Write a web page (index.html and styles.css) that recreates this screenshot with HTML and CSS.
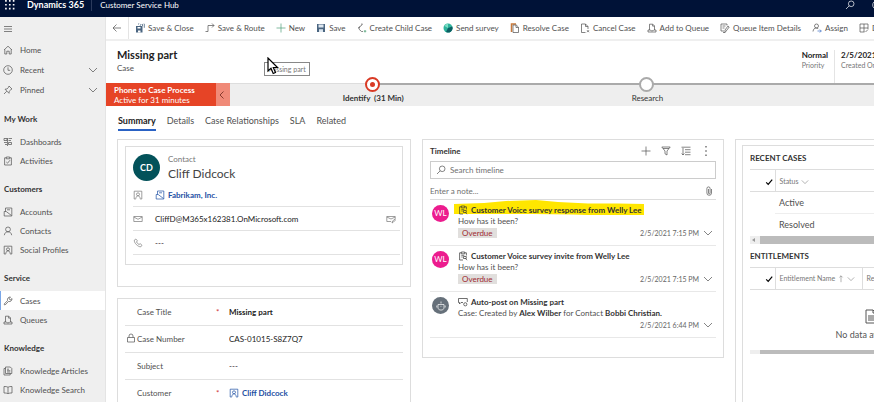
FILE: index.html
```html
<!DOCTYPE html>
<html lang="en">
<head>
<meta charset="utf-8">
<title>Case: Missing part - Dynamics 365</title>
<link rel="stylesheet" href="styles.css">
</head>
<body>
<svg class="sprite" aria-hidden="true">
  <symbol id="chev" viewBox="0 0 10 10"><path d="M1 3l4 4 4-4"/></symbol>
  <symbol id="home" viewBox="0 0 10 10"><path d="M1 5l4-3.800L9 5M1.800 4.500V9h2V6.200h2.400V9h2V4.500"/></symbol>
  <symbol id="clock" viewBox="0 0 10 10"><circle cx="5" cy="5" r="4.300"/><path d="M5 2.300V5.300h2.200"/></symbol>
  <symbol id="pin" viewBox="0 0 10 10"><path d="M6 1l3 3-1 .5-1.800 1.800-.2 2L2 4.200l2-.2L5.600 2.200zM3.800 6.200L1 9"/></symbol>
  <symbol id="dash" viewBox="0 0 10 10"><path d="M1 1.500h3v2H1zM5.500 1.500H9M5.500 3.500H8M1 5.500h3M2 7.500h2M5.500 5.500h3v2h-3zM4.500 1v8"/></symbol>
  <symbol id="activity" viewBox="0 0 10 10"><path d="M3.300 1.800H1.600V9h6.800V1.800H6.700M3.300 1h3.400v1.800H3.300zM3.300 6l1.200 1.200L7 4.200"/></symbol>
  <symbol id="account" viewBox="0 0 10 10"><path d="M2.500 4.500V1H8.800v8H1.200V4.500h2L8.500 8.500M4 2.800h3"/></symbol>
  <symbol id="person" viewBox="0 0 10 10"><circle cx="5" cy="3.400" r="2.400"/><path d="M1.300 9.200C1.700 6.900 3 5.800 5 5.800s3.300 1.100 3.700 3.400"/></symbol>
  <symbol id="profile" viewBox="0 0 10 10"><path d="M2.800 9H1.200V1.200h7.600V9H7.200"/><circle cx="5" cy="4.300" r="1.500"/><path d="M2.800 8.800c.2-2 1-2.900 2.200-2.900s2 .9 2.200 2.900"/></symbol>
  <symbol id="wrench" viewBox="0 0 10 10"><path d="M1 8.200l3.500-3.600C4 2.500 5.500.8 7.500 1L6.300 2.300l.3 1.200 1.200.2L9 2.500C9.200 4.500 7.500 6 5.500 5.500L2 9.100z"/></symbol>
  <symbol id="queue" viewBox="0 0 10 10"><path d="M2.500 7V1.200h3.300l1.700 1.700V7M5.600 1.400v1.700h1.700M1 7h2.200l.8.800h2l.8-.8H9v2H1z"/></symbol>
  <symbol id="article" viewBox="0 0 10 10"><path d="M2.500 7.500V1h4.800l1.500 1.500v5zM2.500 2.500H1V9h6.200V7.500M4 3.200h2M4 4.700h3.300M4 6h3.300"/></symbol>
  <symbol id="book" viewBox="0 0 10 10"><path d="M5 2.200C4 1.500 2.500 1.500 1 1.500V8c1.500 0 3 0 4 .8 1-.8 2.500-.8 4-.8V1.500c-1.500 0-3 0-4 .7zM5 2.200v6.600"/></symbol>
  <symbol id="search" viewBox="0 0 10 10"><circle cx="6.200" cy="3.800" r="2.800"/><path d="M4.200 5.800L1 9"/></symbol>
  <symbol id="plus" viewBox="0 0 10 10"><path d="M5 .5v9M.5 5h9"/></symbol>
  <symbol id="mail" viewBox="0 0 10 10"><path d="M.8 2.500h8.400v5H.8zM.8 3L5 5.300 9.200 3"/></symbol>
  <symbol id="clip" viewBox="0 0 10 10"><path d="M3.300 1.800H1.600V9H5M8.400 4.500V1.800H6.700M3.300 1h3.400v1.800H3.300zM3.300 4.300h3M3.300 6h1.500M5.500 5.500h2.800v2H5.500zM7.500 7.500L9 9.200"/></symbol>
  <symbol id="check" viewBox="0 0 10 10"><path d="M1.500 5.500L4 8l5-6"/></symbol>
</svg>

<div class="shell">
  <header class="topbar">
    <button class="plain waffle" aria-label="App launcher"><svg viewBox="0 0 10 10"><path d="M1 1h1.500v1.500H1zM4.500 1H6v1.500H4.500zM8 1h1.500v1.500H8zM1 4.500h1.500V6H1zM4.500 4.500H6V6H4.500zM8 4.500h1.500V6H8zM1 8h1.500v1.500H1zM4.500 8H6v1.500H4.500zM8 8h1.500v1.500H8z"/></svg></button>
    <a class="brand" href="#">Dynamics 365</a>
    <a class="app" href="#">Customer Service Hub</a>
    <div class="tools">
      <button class="plain" aria-label="Search"><svg class="icon"><use href="#search"/></svg></button>
      <button class="plain" aria-label="Assistant"><svg class="icon"><use href="#clock"/></svg></button>
    </div>
  </header>

  <div class="body">
    <nav class="sidebar">
      <button class="plain burger" aria-label="Site map"><svg class="icon" viewBox="0 0 10 10"><path d="M1 2.500h8M1 5h8M1 7.500h8"/></svg></button>
      <a class="nav tall" href="#"><svg class="icon"><use href="#home"/></svg>Home</a>
      <a class="nav tall" href="#"><svg class="icon"><use href="#clock"/></svg>Recent<svg class="icon more"><use href="#chev"/></svg></a>
      <a class="nav tall" href="#"><svg class="icon"><use href="#pin"/></svg>Pinned<svg class="icon more"><use href="#chev"/></svg></a>
      <h2>My Work</h2>
      <a class="nav" href="#"><svg class="icon"><use href="#dash"/></svg>Dashboards</a>
      <a class="nav" href="#"><svg class="icon"><use href="#activity"/></svg>Activities</a>
      <h2>Customers</h2>
      <a class="nav" href="#"><svg class="icon"><use href="#account"/></svg>Accounts</a>
      <a class="nav" href="#"><svg class="icon"><use href="#person"/></svg>Contacts</a>
      <a class="nav" href="#"><svg class="icon"><use href="#profile"/></svg>Social Profiles</a>
      <h2>Service</h2>
      <a class="nav current" href="#" aria-current="page"><svg class="icon"><use href="#wrench"/></svg>Cases</a>
      <a class="nav" href="#"><svg class="icon"><use href="#queue"/></svg>Queues</a>
      <h2>Knowledge</h2>
      <a class="nav" href="#"><svg class="icon"><use href="#article"/></svg>Knowledge Articles</a>
      <a class="nav" href="#"><svg class="icon"><use href="#book"/></svg>Knowledge Search</a>
    </nav>

    <main class="main">
      <div class="commands">
        <button class="plain back" aria-label="Back"><svg class="icon" viewBox="0 0 10 10"><path d="M9 5H1M4.500 1.500L1 5l3.500 3.500"/></svg></button>
        <button class="plain cmd"><svg class="icon" viewBox="0 0 10 10"><path fill="#4a6580" stroke="none" d="M1 3h6.500v6.500H1z"/><path fill="#fff" stroke="none" d="M2.500 4h3v1.500h-3zM3 7.500h2.500v2H3z"/><path stroke="#2f4f6e" d="M3 1h1M5 .8l1 1-1 1M8 .8L7 2l1 1M9.300.8v4"/></svg>Save &amp; Close</button>
        <button class="plain cmd"><svg class="icon" viewBox="0 0 10 10"><path d="M.5 8.500H3v-6h6M7 .5l2 2-2 2"/></svg>Save &amp; Route</button>
        <button class="plain cmd"><svg class="icon green"><use href="#plus"/></svg>New</button>
        <button class="plain cmd"><svg class="icon" viewBox="0 0 10 10"><path fill="#4a6580" stroke="none" d="M1 1h8v8H1z"/><path fill="#dce6ef" stroke="none" d="M2.500 1.500h5v3h-5zM3 6.200h4V9H3z"/></svg>Save</button>
        <button class="plain cmd"><svg class="icon" viewBox="0 0 10 10"><path d="M5.500 1.500L3 3.500 1.800 6 4.500 8.500H6M3 3.500L1 5M5.500 1l-1.500.2"/><path stroke="#3f9a6b" d="M8 7v2.500M6.800 8.200h2.500"/></svg>Create Child Case</button>
        <button class="plain cmd"><svg class="icon" viewBox="0 0 10 10"><circle cx="5" cy="5" r="4.500" fill="#2fb39c" stroke="none"/><path fill="#0b5f63" stroke="none" d="M5 5l4.300-1.500A4.500 4.500 0 0 1 3 9z"/><path fill="#7ddcc4" stroke="none" d="M1.500 3A4.500 4.500 0 0 1 5 .5L5 5z"/></svg>Send survey</button>
        <button class="plain cmd"><svg class="icon" viewBox="0 0 10 10"><path stroke="#c9793a" stroke-width="1.500" d="M1.500 9V1H6"/><path d="M3 2h3.300l2.200 2.200v5.300H3zM6 2v2.500h2.500"/></svg>Resolve Case</button>
        <button class="plain cmd"><svg class="icon" viewBox="0 0 10 10"><path d="M5.500 9.500H1.500V1h4L8 3.500V6M5.500 1v2.500H8M7 7.200l2 2M9 7.200l-2 2"/></svg>Cancel Case</button>
        <button class="plain cmd"><svg class="icon"><use href="#queue"/></svg>Add to Queue</button>
        <button class="plain cmd"><svg class="icon" viewBox="0 0 10 10"><path d="M1 1h6v1.500M1 1v7h3M2.500 3h3M2.500 5h2M5 9.500V7l3-4 1.200 1-3 4zM3 9.500h2"/></svg>Queue Item Details</button>
        <button class="plain cmd"><svg class="icon" viewBox="0 0 10 10"><circle cx="4.500" cy="3" r="2"/><path d="M1 8.500C1.300 6 2.500 5 4.500 5l1.700.6"/><path stroke="#3c6fc4" d="M5.500 8h3.800M7.800 6.500L9.300 8 7.800 9.500"/></svg>Assign</button>
        <button class="plain cmd"><svg class="icon" viewBox="0 0 10 10"><path d="M1 1h8v5M1 1v8h4.500M1 5h8M5 1v8M6.500 9L9 6.500"/></svg>D</button>
      </div>

      <div class="record">
        <div class="heading">
          <h1>Missing part</h1>
          <p>Case</p>
        </div>
        <dl class="stats">
          <div><dd>Normal</dd><dt>Priority</dt></div>
          <div><dd>2/5/2021</dd><dt>Created On</dt></div>
        </dl>
        <div class="tip" role="tooltip">Missing part</div>
        <svg class="cursor" viewBox="0 0 12 18"><path d="M1 1v13l3-2.700 2.200 5.200 2.300-1-2.200-5H10.500z"/></svg>
      </div>

      <div class="process">
        <button class="plain flow"><b>Phone to Case Process</b><span>Active for 31 minutes</span></button>
        <button class="plain fold" aria-label="Previous stage"><svg class="icon" viewBox="0 0 10 10"><path d="M6.500 1.500L3 5l3.500 3.500"/></svg></button>
        <ol class="stages">
          <li class="active"><i class="dot"></i>Identify &nbsp;(31 Min)</li>
          <li><i class="dot"></i>Research</li>
          <li class="rest"></li>
        </ol>
      </div>

      <div class="tabs" role="tablist">
        <button class="plain tab on" role="tab" aria-selected="true">Summary</button>
        <button class="plain tab" role="tab">Details</button>
        <button class="plain tab" role="tab">Case Relationships</button>
        <button class="plain tab" role="tab">SLA</button>
        <button class="plain tab" role="tab">Related</button>
      </div>

      <div class="columns">
        <div class="column">
          <section class="card contact">
            <div class="inner">
              <div class="who">
                <span class="initials">CD</span>
                <div><p>Contact</p><h3>Cliff Didcock</h3></div>
              </div>
              <div class="line"><svg class="icon"><use href="#profile"/></svg><a href="#"><svg class="icon"><use href="#account"/></svg>Fabrikam, Inc.</a></div>
              <div class="line"><svg class="icon"><use href="#mail"/></svg><span>CliffD@M365x162381.OnMicrosoft.com</span><button class="plain send" aria-label="Send email"><svg class="icon" viewBox="0 0 10 10"><path d="M5 7.500H.8v-5h8.400V5M.8 3L5 5l4.200-2M6 9l.5-2L9 5.200l.5.8L7.500 8z"/></svg></button></div>
              <div class="line"><svg class="icon" viewBox="0 0 10 10"><path d="M2.800 1L1.300 2.200C1 5 5 9 7.800 8.800L9 7.300 7.200 5.700l-1.200.8C5 6 4 5 3.500 4l.9-1.200z"/></svg><span>---</span></div>
            </div>
          </section>
          <section class="card form">
            <div class="field"><label for="title">Case Title</label><em>*</em><input id="title" class="strong" value="Missing part"></div>
            <div class="field"><svg class="icon lock" viewBox="0 0 10 10"><path d="M1.500 4.500h7V9h-7zM3 4.500V3a2 2 0 0 1 4 0v1.500"/></svg><label for="number">Case Number</label><em></em><input id="number" value="CAS-01015-S8Z7Q7" readonly></div>
            <div class="field"><label for="subject">Subject</label><em></em><input id="subject" value="---"></div>
            <div class="field"><span class="label">Customer</span><em>*</em><a href="#"><svg class="icon"><use href="#profile"/></svg>Cliff Didcock</a></div>
          </section>
        </div>

        <section class="card timeline">
          <div class="bar">
            <h3>Timeline</h3>
            <button class="plain" aria-label="Add"><svg class="icon"><use href="#plus"/></svg></button>
            <button class="plain" aria-label="Filter"><svg class="icon" viewBox="0 0 10 10"><path d="M.8 1h8.400L6 5v4L4 7.800V5zM2 2.500h6"/></svg></button>
            <button class="plain" aria-label="Sort"><svg class="icon" viewBox="0 0 10 10"><path d="M.5 1.200h9M4 3.700h5.500M4 6.200h5.500M4 8.700h5.500M2 2v7M.7 7.500L2 9l1.300-1.500"/></svg></button>
            <button class="plain" aria-label="More"><svg class="icon solid" viewBox="0 0 10 10"><path d="M4.400 0h1.200v1.500H4.400zM4.400 4.200h1.200v1.500H4.400zM4.400 8.400h1.200v1.500H4.400z"/></svg></button>
          </div>
          <label class="find"><svg class="icon"><use href="#search"/></svg><input type="search" placeholder="Search timeline" aria-label="Search timeline"></label>
          <label class="note"><input placeholder="Enter a note..." aria-label="Enter a note"><svg class="icon" viewBox="0 0 10 10"><path d="M7.500 3v4a2.300 2.300 0 0 1-4.600 0V2.500a1.600 1.600 0 0 1 3.200 0V7a.8.8 0 0 1-1.600 0V3"/></svg></label>
          <article class="entry">
            <svg class="marker" viewBox="0 0 190 15" preserveAspectRatio="none"><path d="M0 4L30 3 52 1 82 0l22 2 30 1.500h30L190 4v11l-12 .2-30 .3-30-1-40-.5H0z"/></svg>
            <span class="face">WL</span>
            <div class="text">
              <h4><svg class="icon"><use href="#clip"/></svg>Customer Voice survey response from Welly Lee</h4>
              <p>How has it been?</p>
              <div class="foot"><span class="badge">Overdue</span><time>2/5/2021 7:15 PM</time><svg class="icon"><use href="#chev"/></svg></div>
            </div>
          </article>
          <article class="entry">
            <span class="face">WL</span>
            <div class="text">
              <h4><svg class="icon"><use href="#clip"/></svg>Customer Voice survey invite from Welly Lee</h4>
              <p>How has it been?</p>
              <div class="foot"><span class="badge">Overdue</span><time>2/5/2021 7:15 PM</time><svg class="icon"><use href="#chev"/></svg></div>
            </div>
          </article>
          <article class="entry">
            <span class="face bot"><svg class="icon" viewBox="0 0 10 10"><path d="M5 .5v2M2 3.500h6v3.700L6.500 9h-3L2 7.200zM.8 4.500v2M9.200 4.500v2M4 5.300h.5M5.600 5.300h.5"/></svg></span>
            <div class="text">
              <h4><svg class="icon" viewBox="0 0 10 10"><path d="M5 5.500H3L1.500 7V5.500H.5v-4h8.800V5"/><circle cx="7.300" cy="7.300" r="1.600"/></svg>Auto-post on Missing part</h4>
              <p>Case: Created by <b>Alex Wilber</b> for Contact <b>Bobbi Christian.</b></p>
              <div class="foot"><time>2/5/2021 6:44 PM</time><svg class="icon"><use href="#chev"/></svg></div>
            </div>
          </article>
        </section>

        <section class="card related">
          <div class="inner">
            <h3>RECENT CASES</h3>
            <table>
              <thead><tr><th class="pick"><svg class="icon tick"><use href="#check"/></svg></th><th>Status<svg class="icon"><use href="#chev"/></svg></th></tr></thead>
              <tbody>
                <tr><td></td><td>Active</td></tr>
                <tr><td></td><td>Resolved</td></tr>
              </tbody>
            </table>
            <div class="scroll"><b></b><i></i></div>
            <h3>ENTITLEMENTS</h3>
            <table>
              <thead><tr><th class="pick"><svg class="icon tick"><use href="#check"/></svg></th><th class="name">Entitlement Name<svg class="icon" viewBox="0 0 10 10"><path d="M5 9V1M3 3l2-2 2 2"/></svg><svg class="icon"><use href="#chev"/></svg></th><th class="last">Re</th></tr></thead>
            </table>
            <div class="empty">
              <svg viewBox="0 0 12 15"><path d="M1 1h7l3 3v10H1zM8 1v3h3M3 7h6M3 9h6M3 11h6"/></svg>
              <p>No data available.</p>
            </div>
            <div class="scroll thin"><i></i></div>
          </div>
        </section>
      </div>
    </main>
  </div>
</div>
</body>
</html>
```
FILE: styles.css
```css
* { box-sizing: border-box; }
body, h1, h2, h3, h4, p, dl, dd, ol { margin: 0; padding: 0; }
body {
  font: 8px/12px Lato, "Open Sans", sans-serif;
  color: #505050;
  background: #fff;
}
a { color: inherit; text-decoration: none; }
input {
  min-width: 0;
  padding: 0;
  border: 0;
  outline: 0;
  background: none;
  font: inherit;
  color: #222;
}
input::placeholder { color: #707070; opacity: 1; }
.plain {
  flex: none;
  display: flex;
  align-items: center;
  padding: 0;
  border: 0;
  background: none;
  color: inherit;
  font: inherit;
  white-space: nowrap;
}
.sprite { display: none; }
.icon {
  flex: none;
  width: 10px;
  height: 10px;
  fill: none;
  stroke: currentColor;
  stroke-width: 0.7;
}
.icon.solid { fill: currentColor; stroke: none; }
.icon.green { color: #4f9f7a; }

.shell { display: flex; flex-direction: column; height: 100vh; overflow: hidden; }

/* Top bar */
.topbar {
  flex: none;
  display: flex;
  align-items: center;
  height: 17px;
  padding: 0 0 8px 4px;
  background: #001237;
  color: #fff;
}
.waffle svg { width: 11px; height: 11px; fill: #fff; }
.brand { margin-left: 12px; padding-right: 7px; border-right: 1px solid #2b3a5c; font-size: 9px; font-weight: 700; }
.app { margin-left: 8px; }
.tools { display: flex; gap: 17px; margin-left: auto; margin-right: -8px; }

.body { flex: 1; display: flex; min-height: 0; }

/* Site map */
.sidebar { flex: none; width: 106px; background: #efefef; border-right: 1px solid #e4e4e4; }
.burger { height: 23px; padding-left: 3px; }
.nav { display: flex; align-items: center; gap: 7px; height: 19px; padding: 0 7px 0 3px; }
.nav.tall { height: 20px; }
.nav.current { background: #fff; border-left: 1px solid #7aa7e8; padding-left: 2px; }
.more { margin-left: auto; }
.sidebar h2 { height: 24px; margin-top: 8px; padding-left: 4px; font-size: 8px; line-height: 22px; color: #333; }

/* Command bar */
.main { flex: 1; min-width: 0; overflow: hidden; }
.commands { display: flex; align-items: stretch; gap: 11px; height: 24px; border-bottom: 2px solid #efefef; }
.back { width: 23px; padding-left: 6px; border-right: 1px solid #e4e4e4; margin-right: -5px; }
.cmd { gap: 3px; }

/* Record header */
.record { position: relative; display: flex; height: 42px; padding: 7px 0 0 11px; }
h1 { font-size: 11px; line-height: 14px; color: #222; }
.stats { display: flex; margin-left: auto; padding-top: 2px; }
.stats div { padding: 0 6px; line-height: 10px; white-space: nowrap; }
.stats div + div { width: 40px; padding-right: 0; border-left: 1px solid #e4e4e4; }
.stats dd { font-weight: 700; color: #222; }
.stats dt { color: #777; font-size: 7px; }
.tip {
  position: absolute;
  left: 158px;
  top: 21px;
  padding: 0 3px;
  border: 1px solid #888;
  background: #fff;
  font-size: 7px;
  color: #777;
}
.cursor { position: absolute; left: 161px; top: 16px; width: 12px; height: 18px; fill: #fff; stroke: #000; stroke-width: 1.2; }

/* Process bar */
.process { display: flex; height: 23px; background: #eee; }
.flow {
  display: block;
  width: 110px;
  padding-left: 8px;
  background: #e64426;
  color: #fff;
  text-align: left;
  line-height: 10px;
}
.flow b, .flow span { display: block; }
.fold { width: 14px; padding-left: 1px; background: #f08a78; color: #5c1a10; }
.stages { flex: 1; display: grid; grid-template-columns: 43% 43% 1fr; padding-left: 6px; border-top: 1px solid #ddd; list-style: none; }
.stages li { position: relative; padding-top: 8px; text-align: center; color: #333; }
.stages li::before { content: ""; position: absolute; left: 0; right: 0; top: -1px; height: 2px; background: #aaa; }
.stages .active { font-weight: 700; }
.stages .active::before { left: 50%; }
.dot {
  position: absolute;
  left: calc(50% - 8px);
  top: -7px;
  display: grid;
  place-items: center;
  width: 15px;
  height: 15px;
  border: 2px solid #aaa;
  border-radius: 50%;
  background: #fff;
}
.active .dot { border-color: #d93a25; }
.active .dot::after { content: ""; width: 5px; height: 5px; border-radius: 50%; background: #d93a25; }

/* Tabs */
.tabs { display: flex; gap: 11px; height: 33px; padding: 7px 0 0 12px; align-items: flex-start; font-size: 9px; }
.tab { height: 18px; border-bottom: 2px solid transparent; }
.tab.on { border-color: #2a62c4; font-weight: 700; color: #222; }

/* Cards */
.columns { display: grid; grid-template-columns: 294fr 302fr 139fr; gap: 11px; padding-left: 11px; }
.columns > * { min-width: 0; }
.column { display: flex; flex-direction: column; gap: 11px; }
.card { border: 1px solid #ddd; }
h3 { font-size: 8px; color: #333; }
.contact { padding: 6px 7px 21px; }
.inner { border: 1px solid #ddd; }
.contact .inner { padding: 7px 2px 9px 7px; }
.who { display: flex; gap: 8px; height: 29px; }
.initials {
  width: 27px;
  height: 27px;
  border-radius: 50%;
  background: #03525a;
  color: #fff;
  font-size: 9px;
  font-weight: 700;
  line-height: 27px;
  text-align: center;
}
.who p { line-height: 10px; color: #777; }
.who h3 { font-size: 12px; font-weight: 400; line-height: 19px; color: #444; }
.line { display: flex; align-items: center; height: 24px; padding-right: 4px; border-bottom: 1px solid #e2e2e2; color: #777; }
.line span, .line a { margin-left: 12px; color: #222; }
.line a, .field a { display: flex; align-items: center; gap: 3px; color: #1d4fa3; font-weight: 700; }
.send { margin-left: auto; }

.form { padding: 0 7px; }
.field { position: relative; display: flex; align-items: center; height: 27px; padding-left: 12px; border-bottom: 1px solid #e2e2e2; }
.field label, .label { flex: none; width: 79px; }
.field em { width: 13px; color: #d13438; font-style: normal; }
.field input { flex: 1; }
.field .strong { font-weight: 700; }
.lock { position: absolute; left: 1px; top: 7px; }

/* Timeline */
.timeline { align-self: start; padding: 1px 7px 19px; }
.bar { display: flex; align-items: center; gap: 10px; height: 20px; padding-right: 5px; }
.bar h3 { margin-right: auto; }
.find { display: flex; align-items: center; gap: 4px; height: 18px; padding-left: 5px; border: 1px solid #ccc; }
.find input { flex: 1; }
.note { display: flex; align-items: center; height: 21px; padding: 3px 2px 0 0; border-bottom: 1px solid #ddd; }
.note input { flex: 1; }
.entry { position: relative; display: flex; gap: 9px; height: 46px; padding: 4px 0 0 2px; border-bottom: 1px solid #e8e8e8; }
.marker { position: absolute; left: 24px; top: 0; width: 190px; height: 15px; fill: #ffe600; }
.face {
  flex: none;
  width: 17px;
  height: 17px;
  margin-top: 1px;
  border-radius: 50%;
  background: #ec1c8e;
  color: #fff;
  line-height: 17px;
  text-align: center;
}
.bot { display: grid; place-items: center; background: #66707a; }
.text { position: relative; flex: 1; min-width: 0; }
.text h4 { display: flex; align-items: center; gap: 3px; font-size: 8px; color: #333; }
.text p { line-height: 11px; }
.text b { color: #333; }
.foot { display: flex; align-items: center; gap: 4px; height: 12px; padding-right: 3px; }
.foot time { margin-left: auto; font-size: 7px; color: #666; }
.badge { padding: 0 4px; background: #e1dfdd; color: #a02a30; line-height: 10px; }

/* Related records */
.related { min-height: 280px; padding: 5px 0 0 6px; border-right: 0; overflow: hidden; }
.related .inner { width: 250px; min-height: 280px; padding: 6px 0 0 7px; }
.related h3 { height: 17px; font-weight: 700; }
.related table { width: 100%; border-collapse: collapse; border-top: 1px solid #ddd; }
.related th { height: 22px; padding: 0 0 0 4px; border-bottom: 1px solid #ddd; font-size: 7px; font-weight: 400; text-align: left; color: #777; }
.related th .icon { margin-left: 2px; vertical-align: middle; width: 8px; height: 8px; }
.related .pick { width: 25px; padding: 0 2px 0 0; text-align: right; border-right: 1px solid #ddd; }
.related .tick { color: #000; stroke-width: 1.5; }
.related .name { width: 87px; }
.related .last { border-left: 1px solid #ddd; }
.related td { height: 22px; padding: 0 0 0 4px; font-size: 9px; }
.related tbody tr:first-child td + td { border-bottom: 1px solid #eee; }
.scroll { position: relative; display: flex; height: 8px; margin-bottom: 6px; padding-left: 10px; background: #eee; }
.scroll i { flex: 1; background: #bcbcbc; }
.scroll b { position: absolute; left: 2px; top: 2px; border: 2px solid transparent; border-left: 0; border-right: 3px solid #999; }
.scroll.thin { height: 4px; }
.empty { height: 60px; padding-top: 19px; text-align: center; font-size: 9px; color: #555; }
.empty svg { display: block; width: 12px; height: 15px; margin: 0 auto 5px; fill: none; stroke: #555; }
```
